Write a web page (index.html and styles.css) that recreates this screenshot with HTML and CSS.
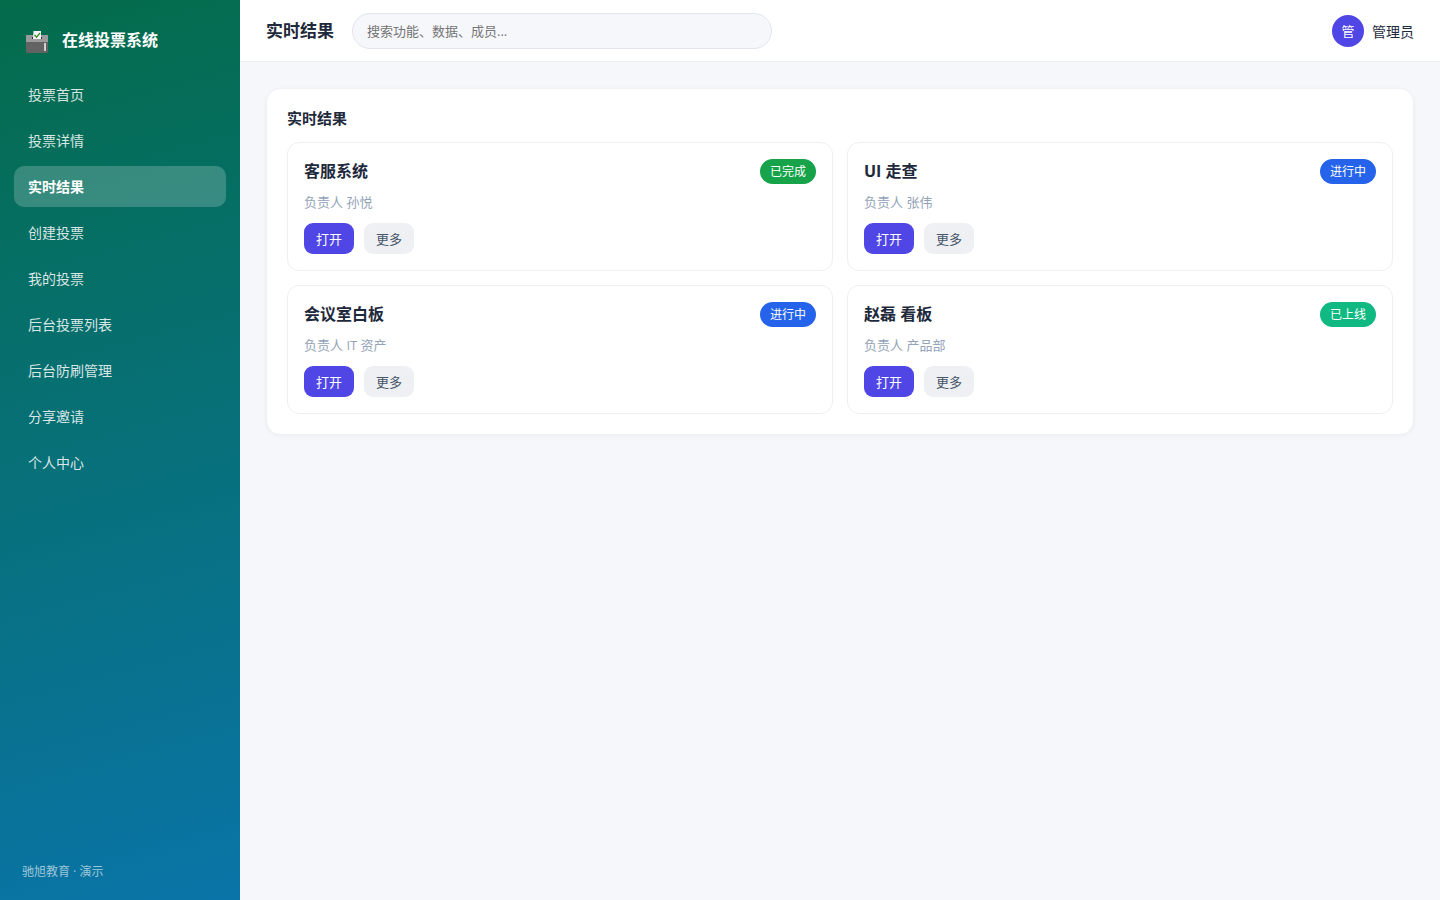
FILE: index.html
```html
<!DOCTYPE html>
<html lang="zh-CN">
<head>
<meta charset="utf-8">
<meta name="viewport" content="width=device-width, initial-scale=1">
<title>实时结果 - 在线投票系统</title>
<link rel="stylesheet" href="styles.css">
</head>
<body>
<div class="app">
  <aside class="sidebar">
    <div class="brand">
      <svg class="brand-icon" viewBox="0 0 24 24" aria-hidden="true">
        <path d="M1 5h22v7H1z" fill="#9b9b9b"/>
        <path d="M1 12h22v9.500a1.500 1.500 0 0 1-1.500 1.500h-19a1.500 1.500 0 0 1-1.500-1.500z" fill="#636363"/>
        <path d="M7 7h10v2H7z" fill="#3d2b50"/>
        <path d="M8.500 1h7.500v8H8z" fill="#f5f5f8"/>
        <path d="M9.500 5l2 2.200L15 3" fill="none" stroke="#43962b" stroke-width="1.500"/>
        <path d="M19 13h2v8h-2z" fill="#d0d0d0"/>
      </svg>
      <span>在线投票系统</span>
    </div>
    <nav class="nav">
      <a class="nav-item" href="#">投票首页</a>
      <a class="nav-item" href="#">投票详情</a>
      <a class="nav-item active" href="#" aria-current="page">实时结果</a>
      <a class="nav-item" href="#">创建投票</a>
      <a class="nav-item" href="#">我的投票</a>
      <a class="nav-item" href="#">后台投票列表</a>
      <a class="nav-item" href="#">后台防刷管理</a>
      <a class="nav-item" href="#">分享邀请</a>
      <a class="nav-item" href="#">个人中心</a>
    </nav>
    <div class="sidebar-foot">驰旭教育 · 演示</div>
  </aside>
  <div class="main">
    <header class="topbar">
      <h1 class="page-title">实时结果</h1>
      <input class="search" type="search" placeholder="搜索功能、数据、成员..." aria-label="搜索">
      <div class="user"><span class="avatar">管</span><span>管理员</span></div>
    </header>
    <main class="content">
      <section class="panel">
        <h2 class="panel-title">实时结果</h2>
        <div class="grid">
          <article class="card">
            <div class="card-head"><h3 class="card-title">客服系统</h3><span class="badge done">已完成</span></div>
            <p class="owner">负责人 孙悦</p>
            <div class="actions"><button class="btn primary" type="button">打开</button><button class="btn" type="button">更多</button></div>
          </article>
          <article class="card">
            <div class="card-head"><h3 class="card-title">UI 走查</h3><span class="badge progress">进行中</span></div>
            <p class="owner">负责人 张伟</p>
            <div class="actions"><button class="btn primary" type="button">打开</button><button class="btn" type="button">更多</button></div>
          </article>
          <article class="card">
            <div class="card-head"><h3 class="card-title">会议室白板</h3><span class="badge progress">进行中</span></div>
            <p class="owner">负责人 IT 资产</p>
            <div class="actions"><button class="btn primary" type="button">打开</button><button class="btn" type="button">更多</button></div>
          </article>
          <article class="card">
            <div class="card-head"><h3 class="card-title">赵磊 看板</h3><span class="badge online">已上线</span></div>
            <p class="owner">负责人 产品部</p>
            <div class="actions"><button class="btn primary" type="button">打开</button><button class="btn" type="button">更多</button></div>
          </article>
        </div>
      </section>
    </main>
  </div>
</div>
</body>
</html>
```
FILE: styles.css
```css
* { box-sizing: border-box; }
body, h1, h2, h3, p { margin: 0; }
body {
  font-family: "Open Sans", "Noto Sans CJK SC", sans-serif;
  font-size: 14px;
  color: #1e293b;
  background: #f5f7fb;
}
button, input { font-family: inherit; }
.app { display: flex; min-height: 100vh; }

.sidebar {
  flex: 0 0 240px;
  display: flex;
  flex-direction: column;
  padding: 21px 14px;
  color: #fff;
  background: linear-gradient(165deg, #046c4a, #0a74a8);
}
.brand {
  display: flex;
  align-items: center;
  gap: 13px;
  height: 36px;
  padding: 0 11px;
  margin-bottom: 17px;
  font-size: 16px;
  font-weight: 700;
}
.brand-icon { width: 24px; height: 24px; margin-top: 6px; }
.nav { display: flex; flex-direction: column; gap: 5px; }
.nav-item {
  padding: 10px 14px;
  border-radius: 10px;
  line-height: 21px;
  color: rgba(255, 255, 255, .85);
  text-decoration: none;
}
.nav-item.active { background: rgba(255, 255, 255, .2); color: #fff; font-weight: 700; }
.sidebar-foot {
  margin-top: auto;
  padding: 0 8px;
  font-size: 12px;
  line-height: 14px;
  color: rgba(255, 255, 255, .6);
}

.main { flex: 1; min-width: 0; }
.topbar {
  display: flex;
  align-items: center;
  gap: 18px;
  height: 62px;
  padding: 0 26px;
  background: #fff;
  border-bottom: 1px solid #edeef3;
}
.page-title { font-size: 17px; line-height: 24px; white-space: nowrap; }
.search {
  flex: 0 1 420px;
  min-width: 0;
  height: 36px;
  padding: 0 14px;
  border: 1px solid #e2e5ee;
  border-radius: 18px;
  background: #f5f7fb;
  font-size: 13px;
}
.search::placeholder { color: #757575; }
.user { display: flex; align-items: center; gap: 8px; margin-left: auto; white-space: nowrap; }
.avatar {
  display: grid;
  place-items: center;
  width: 32px;
  height: 32px;
  border-radius: 50%;
  background: #4f46e5;
  color: #fff;
  font-size: 13px;
}

.content { padding: 26px; }
.panel {
  padding: 20px;
  border: 1px solid #f0f1f5;
  border-radius: 14px;
  background: #fff;
  box-shadow: 0 1px 4px rgba(15, 23, 42, .04);
}
.panel-title { margin-bottom: 14px; font-size: 15px; line-height: 19px; }
.grid { display: grid; grid-template-columns: 1fr 1fr; gap: 14px; }
.card { padding: 16px; border: 1px solid #eeeff3; border-radius: 12px; }
.card-head { display: flex; align-items: center; justify-content: space-between; }
.card-title { font-size: 16px; line-height: 25px; }
.badge {
  padding: 0 10px;
  border-radius: 13px;
  font-size: 12px;
  line-height: 25px;
  color: #fff;
}
.done { background: #16a34a; }
.progress { background: #2563eb; }
.online { background: #10b981; }
.owner { margin: 8px 0 10px; font-size: 13px; line-height: 21px; color: #94a3b8; }
.actions { display: flex; gap: 10px; }
.btn {
  height: 31px;
  padding: 0 12px;
  border: 0;
  border-radius: 9px;
  background: #eef0f4;
  color: #475569;
  font-size: 13px;
  cursor: pointer;
}
.btn.primary { background: #4f46e5; color: #fff; }
```
